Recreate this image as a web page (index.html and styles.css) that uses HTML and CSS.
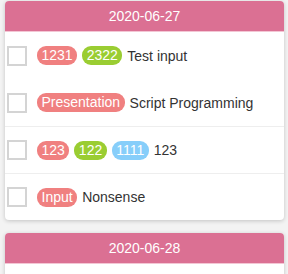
FILE: index.html
```html
<!DOCTYPE html>
<html lang="en">
<head>
    <meta charset="UTF-8">
    <meta name="viewport" content="width=device-width, initial-scale=1.0">
    <title>Todo List</title>
    <link rel="stylesheet" href="styles.css">
</head>
<body>
    <div class="day">
        <div class="day-header">2020-06-27</div>
        <ul class="todo-list">
            <li class="todo">
                <span class="check"></span>
                <span class="tag red">1231</span>
                <span class="tag green">2322</span>
                <span class="title">Test input</span>
            </li>
            <li class="todo">
                <span class="check"></span>
                <span class="tag red">Presentation</span>
                <span class="title">Script Programming</span>
            </li>
            <li class="todo lined">
                <span class="check"></span>
                <span class="tag red">123</span>
                <span class="tag green">122</span>
                <span class="tag blue">1111</span>
                <span class="title">123</span>
            </li>
            <li class="todo lined">
                <span class="check"></span>
                <span class="tag red">Input</span>
                <span class="title">Nonsense</span>
            </li>
        </ul>
    </div>

    <div class="day">
        <div class="day-header">2020-06-28</div>
        <ul class="todo-list">
            <li class="todo">
                <span class="check"></span>
                <span class="title">&nbsp;</span>
            </li>
        </ul>
    </div>
</body>
</html>
```

FILE: styles.css
```css
/* ======= General ======= */
body {
    font-family: "Liberation Sans", Arial, sans-serif;
    margin: 0;
    padding: 1px 4px 0 5px;
    background: #f3f3f3;
    color: #333;
    font-size: 14px;
}

/* ======= Day Card ======= */
.day {
    background: white;
    border-radius: 4px;
    box-shadow: 0 1px 4px rgba(0, 0, 0, 0.2);
    margin-bottom: 13px;
    overflow: hidden;
}

.day-header {
    background: palevioletred;
    color: white;
    text-align: center;
    height: 30px;
    line-height: 31px;
    font-size: 14px;
    border-bottom: 1px solid #f3c6d4;
}

/* ======= Todo Rows ======= */
.todo-list {
    list-style: none;
    margin: 0;
    padding: 0;
}

.todo {
    display: flex;
    align-items: center;
    gap: 5px;
    height: 47px;
    padding: 0 2px;
}

.todo.lined {
    height: 46px;
    border-top: 1px solid #eee;
}

.check {
    width: 16px;
    height: 16px;
    border: 2px solid #d4d4d4;
    margin-right: 5px;
    flex-shrink: 0;
}

.tag {
    color: white;
    padding: 0 4.5px;
    height: 19px;
    line-height: 19px;
    border-radius: 9px;
}

.red {
    background: lightcoral;
}

.green {
    background: yellowgreen;
}

.blue {
    background: #87cefa;
}

.title {
    color: #333;
}
```
